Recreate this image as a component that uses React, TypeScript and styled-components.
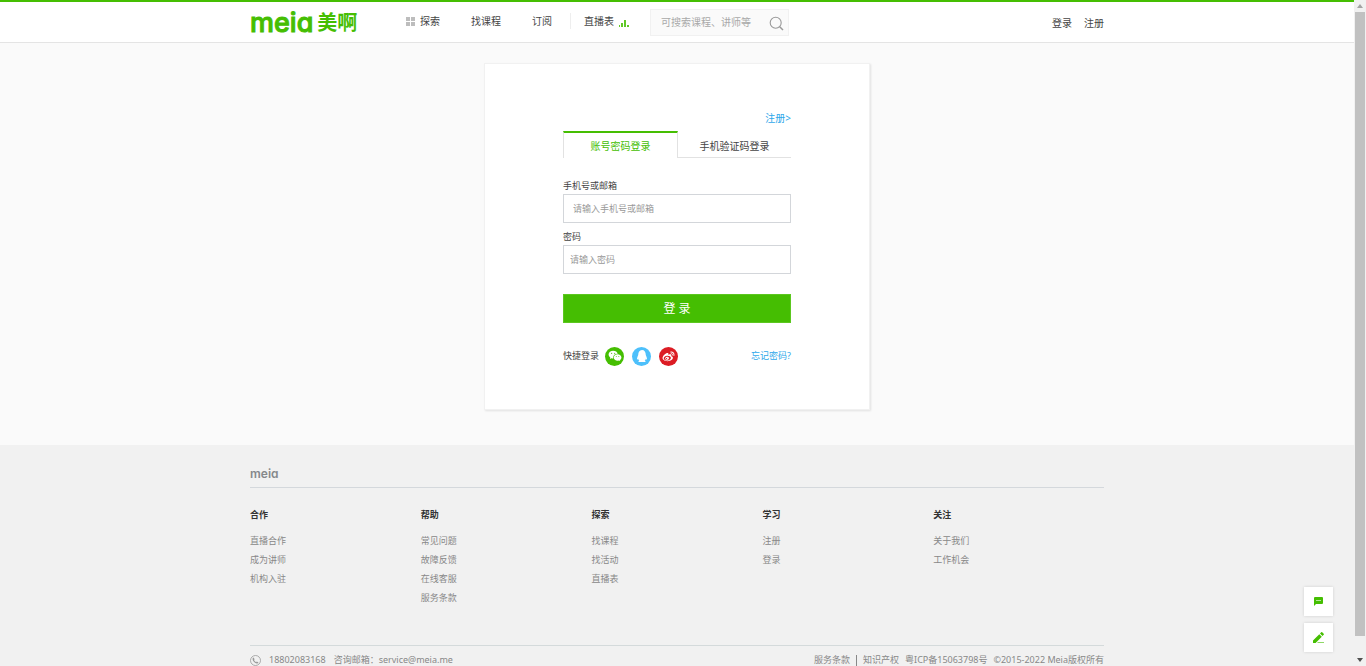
import React from "react";
import styled, { createGlobalStyle } from "styled-components";
import { RiWechatFill, RiWeiboFill } from "react-icons/ri";
import { FaQq } from "react-icons/fa";

const green = "#45be02";
const blue = "#2fa8ea";

const GlobalStyle = createGlobalStyle`
  *, *::before, *::after { box-sizing: border-box; }
  body {
    margin: 0;
    color: #444;
    background: #fafafa;
    font-family: "Noto Sans", "Noto Sans CJK SC", sans-serif;
    font-size: 10px;
    line-height: 16px;
  }
  a { color: inherit; text-decoration: none; }
  button, input { font: inherit; border-radius: 0; }
  ul, h1, h3 { margin: 0; padding: 0; list-style: none; }
  svg { display: block; }
`;

const Shell = styled.div`
  display: flex;
  height: 100vh;
  overflow: hidden;
`;

const Page = styled.div`
  flex: 1;
  min-width: 0;
  overflow: hidden;
`;

const Container = styled.div`
  width: 100%;
  max-width: 854px;
  margin: 0 auto;
`;

const Header = styled.header`
  background: #fff;
  border-top: 2px solid ${green};
  border-bottom: 1px solid #e4e4e4;
`;

const HeaderRow = styled(Container)`
  display: flex;
  align-items: center;
  height: 40px;
`;

const Brand = styled.a`
  display: flex;
  align-items: center;
  gap: 4px;
  width: 156px;
  color: ${green};
`;

const Wordmark = styled.span<{ $size: number; $weight: number; $stroke: number }>`
  font-family: Inter, sans-serif;
  font-weight: ${(p) => p.$weight};
  font-size: ${(p) => p.$size}px;
  line-height: 1;
  font-feature-settings: "cv11", "ss03";
  -webkit-text-stroke: ${(p) => p.$stroke}px currentColor;
`;

const BrandName = styled.span`
  font-family: "Noto Sans CJK SC", sans-serif;
  font-weight: 700;
  font-size: 20px;
  line-height: 24px;
`;

const Nav = styled.nav`
  display: flex;
  align-items: center;
  height: 16px;
  margin-bottom: 2px;
`;

const NavLink = styled.a<{ $space?: number }>`
  display: flex;
  align-items: center;
  gap: 5px;
  margin-right: ${(p) => p.$space ?? 31}px;
`;

const Divider = styled.span`
  width: 1px;
  height: 16px;
  margin-right: 13px;
  background: #eee;
`;

const Search = styled.form`
  display: flex;
  align-items: center;
  width: 139px;
  height: 27px;
  padding: 0 4px 0 10px;
  background: #fafafa;
  border: 1px solid #f1f1f1;
`;

const SearchInput = styled.input`
  flex: 1;
  min-width: 0;
  padding: 0;
  border: 0;
  outline: 0;
  background: none;
  &::placeholder { color: #a9a9a9; }
`;

const IconButton = styled.button`
  padding: 2px 0 0;
  border: 0;
  background: none;
  cursor: pointer;
`;

const Account = styled.div`
  display: flex;
  gap: 12px;
  margin-left: auto;
  padding-top: 2px;
`;

const Main = styled.main`
  padding: 20px 0 35px;
`;

const Card = styled.section`
  width: 386px;
  margin: 0 auto;
  padding: 46px 78px 43px;
  background: #fff;
  border: 1px solid #f1f1f1;
  box-shadow: 1px 1px 2px rgba(0, 0, 0, 0.1);
`;

const RegisterRow = styled.div`
  display: flex;
  justify-content: flex-end;
  margin-bottom: 5px;
  color: ${blue};
`;

const Tabs = styled.div`
  display: flex;
  height: 27px;
  margin-bottom: 20px;
`;

const Tab = styled.button<{ $active?: boolean }>`
  flex: 1;
  padding: ${(p) => (p.$active ? 1 : 4)}px 0 0;
  background: none;
  cursor: pointer;
  color: ${(p) => (p.$active ? green : "#444")};
  border: 0 solid #e2e2e2;
  ${(p) =>
    p.$active
      ? `border-width: 2px 1px 0; border-top-color: ${green};`
      : "border-bottom-width: 1px;"}
`;

const Field = styled.div`
  margin-bottom: 6px;
`;

const Label = styled.label`
  display: block;
  font-size: 9px;
`;

const TextBox = styled.input<{ $indent: number }>`
  display: block;
  width: 100%;
  height: 29px;
  padding: 0 ${(p) => p.$indent}px;
  border: 1px solid #d3d6da;
  outline: 0;
  font-size: 9px;
  background: #fff;
  &::placeholder { color: #999; }
`;

const Submit = styled.button`
  display: block;
  width: 100%;
  height: 29px;
  margin: 20px 0 23px;
  padding: 0;
  border: 1px solid #5cc720;
  background: ${green};
  color: #fff;
  font-size: 12px;
  cursor: pointer;
`;

const QuickRow = styled.div`
  display: flex;
  align-items: center;
  font-size: 9px;
  height: 20px;
`;

const Socials = styled.div`
  display: flex;
  gap: 8px;
  margin-left: 6px;
`;

const Social = styled.a<{ $color: string }>`
  display: flex;
  align-items: center;
  justify-content: center;
  width: 19px;
  height: 19px;
  border-radius: 50%;
  color: #fff;
  background: ${(p) => p.$color};
`;

const Forgot = styled.a`
  margin-left: auto;
  color: ${blue};
`;

const Footer = styled.footer`
  padding-top: 20px;
  background: #f1f1f1;
  color: #888;
  font-size: 9px;
`;

const FooterBrand = styled.div`
  display: flex;
  align-items: center;
  height: 23px;
  padding-bottom: 4px;
  border-bottom: 1px solid #d4d8dc;
  color: #85888b;
`;

const Columns = styled.div`
  display: grid;
  grid-template-columns: repeat(5, 1fr);
  min-height: 157px;
  padding-top: 18px;
`;

const ColumnTitle = styled.h3`
  margin-bottom: 7px;
  color: #333;
  font-size: 9px;
  line-height: 18px;
`;

const ColumnItem = styled.li`
  line-height: 19px;
`;

const Legal = styled.div`
  display: flex;
  align-items: center;
  height: 29px;
  border-top: 1px solid #d4dadb;
`;

const Phone = styled.span`
  margin: 0 8px;
`;

const LegalLinks = styled.div`
  display: flex;
  align-items: center;
  gap: 6px;
  margin-left: auto;
`;

const Bar = styled.span`
  width: 1px;
  height: 11px;
  background: #888;
`;

const Floating = styled.aside`
  position: fixed;
  right: 33px;
  bottom: 14px;
  display: grid;
  gap: 7px;
`;

const FloatButton = styled.button`
  display: flex;
  align-items: center;
  justify-content: center;
  width: 29px;
  height: 29px;
  padding: 0;
  border: 0;
  background: #fff;
  box-shadow: 0 0 3px rgba(0, 0, 0, 0.14);
  cursor: pointer;
`;

const ScrollTrack = styled.div`
  display: flex;
  flex-direction: column;
  align-items: center;
  width: 12px;
  padding: 4px 0;
  background: #f1f1f1;
`;

const ScrollThumb = styled.div`
  flex: 1;
  width: 10px;
  margin: 4px 0 22px;
  background: #c1c1c1;
`;

const columns = [
  { title: "合作", items: ["直播合作", "成为讲师", "机构入驻"] },
  { title: "帮助", items: ["常见问题", "故障反馈", "在线客服", "服务条款"] },
  { title: "探索", items: ["找课程", "找活动", "直播表"] },
  { title: "学习", items: ["注册", "登录"] },
  { title: "关注", items: ["关于我们", "工作机会"] },
];

const GridIcon = () => (
  <svg width="9" height="9" viewBox="0 0 9 9" fill="#bdbdbd">
    <path d="M0 0h4v4H0zM5 0h4v4H5zM0 5h4v4H0zM5 5h4v4H5z" />
  </svg>
);

const BarsIcon = () => (
  <svg width="10" height="12" viewBox="0 0 10 12" fill={green}>
    <path d="M0 10h1v2H0zM2 8h2v4H2zM5 5h2v7H5zM8 10h2v2H8z" opacity=".85" />
  </svg>
);

const SearchIcon = () => (
  <svg width="15" height="15" viewBox="0 0 15 15" fill="none" stroke="#999" strokeWidth="1.1">
    <circle cx="6.7" cy="6.7" r="5.5" />
    <path d="M10.7 10.7 14 14" strokeWidth="1.5" />
  </svg>
);

const PhoneIcon = () => (
  <svg width="11" height="11" viewBox="0 0 22 22" fill="none" stroke="#999" strokeWidth="1.6">
    <circle cx="11" cy="11" r="10" />
    <path
      d="M7.2 5.2 9.3 8.4 8 10c.8 1.900 2.200 3.400 4.200 4.300l1.500-1.200 3.200 2.100c-.6 1.500-1.800 2.200-3.300 2C9.200 16.500 5.500 12.500 5.100 8.200c0-1.400.8-2.500 2.100-3z"
      fill="#999"
      stroke="none"
    />
  </svg>
);

const ChatIcon = () => (
  <svg width="9" height="9" viewBox="0 0 9 9">
    <path d="M1 0h7q1 0 1 1v5q0 1-1 1H2L0 9V1q0-1 1-1z" fill={green} />
    <path d="M2 3.500h5" stroke="#b5e59a" />
  </svg>
);

const PencilIcon = () => (
  <svg width="11" height="11" viewBox="0 0 11 11" fill={green}>
    <path d="M0 11v-2.600L6.300 2.200l2.500 2.500L2.600 11zM7 1.500 8.200.3q.5-.5 1 0l1.500 1.500q.5.5 0 1L9.500 4z" />
    <path d="M5 10h6v1H4z" opacity=".6" />
  </svg>
);

const Arrow = ({ down = false }: { down?: boolean }) => (
  <svg width="6" height="4" viewBox="0 0 6 4" fill={down ? "#505050" : "#a3a3a3"}>
    <path d={down ? "M0 0h6L3 4z" : "M0 4h6L3 0z"} />
  </svg>
);

export default function App() {
  return (
    <Shell>
      <GlobalStyle />
      <Page>
        <Header>
          <HeaderRow>
            <Brand href="#">
              <Wordmark $size={27} $weight={500} $stroke={1}>meia</Wordmark>
              <BrandName>美啊</BrandName>
            </Brand>
            <Nav>
              <NavLink href="#"><GridIcon />探索</NavLink>
              <NavLink href="#">找课程</NavLink>
              <NavLink href="#" $space={18}>订阅</NavLink>
              <Divider />
              <NavLink href="#" $space={21}>直播表<BarsIcon /></NavLink>
            </Nav>
            <Search>
              <SearchInput type="text" aria-label="搜索" placeholder="可搜索课程、讲师等" />
              <IconButton type="button" aria-label="搜索"><SearchIcon /></IconButton>
            </Search>
            <Account>
              <a href="#">登录</a>
              <a href="#">注册</a>
            </Account>
          </HeaderRow>
        </Header>

        <Main>
          <Card>
            <RegisterRow><a href="#">注册&gt;</a></RegisterRow>
            <Tabs>
              <Tab type="button" $active>账号密码登录</Tab>
              <Tab type="button">手机验证码登录</Tab>
            </Tabs>
            <form>
              <Field>
                <Label htmlFor="account">手机号或邮箱</Label>
                <TextBox id="account" type="text" placeholder="请输入手机号或邮箱" $indent={9} />
              </Field>
              <Field>
                <Label htmlFor="password">密码</Label>
                <TextBox id="password" type="password" placeholder="请输入密码" $indent={6} />
              </Field>
              <Submit type="button">登 录</Submit>
            </form>
            <QuickRow>
              快捷登录
              <Socials>
                <Social href="#" aria-label="微信" $color={green}><RiWechatFill size={14} /></Social>
                <Social href="#" aria-label="QQ" $color="#4dc0fb"><FaQq size={12} /></Social>
                <Social href="#" aria-label="微博" $color="#dc1c24"><RiWeiboFill size={13} /></Social>
              </Socials>
              <Forgot href="#">忘记密码?</Forgot>
            </QuickRow>
          </Card>
        </Main>

        <Footer>
          <Container>
            <FooterBrand><Wordmark $size={12} $weight={600} $stroke={0}>meia</Wordmark></FooterBrand>
            <Columns>
              {columns.map((column) => (
                <div key={column.title}>
                  <ColumnTitle>{column.title}</ColumnTitle>
                  <ul>
                    {column.items.map((item) => (
                      <ColumnItem key={item}><a href="#">{item}</a></ColumnItem>
                    ))}
                  </ul>
                </div>
              ))}
            </Columns>
            <Legal>
              <PhoneIcon />
              <Phone>18802083168</Phone>
              <span>咨询邮箱：service@meia.me</span>
              <LegalLinks>
                <a href="#">服务条款</a>
                <Bar />
                <a href="#">知识产权</a>
                <a href="#">粤ICP备15063798号</a>
                <span>©2015-2022 Meia版权所有</span>
              </LegalLinks>
            </Legal>
          </Container>
        </Footer>
      </Page>
      <ScrollTrack>
        <Arrow />
        <ScrollThumb />
        <Arrow down />
      </ScrollTrack>
      <Floating>
        <FloatButton type="button" aria-label="咨询"><ChatIcon /></FloatButton>
        <FloatButton type="button" aria-label="反馈"><PencilIcon /></FloatButton>
      </Floating>
    </Shell>
  );
}
